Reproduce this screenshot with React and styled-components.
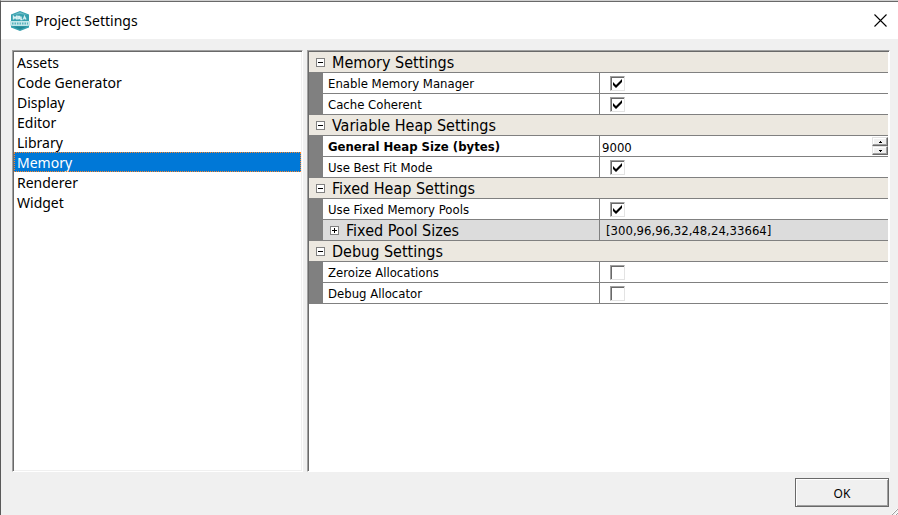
import React, { useState } from "react";
import styled, { createGlobalStyle, css } from "styled-components";

const ui = `"Noto Sans", "Open Sans", sans-serif`;
const grid = `"DejaVu Sans Condensed", "DejaVu Sans", sans-serif`;

const GlobalStyle = createGlobalStyle`
  *, *::before, *::after { box-sizing: border-box; }
  body { margin: 0; background: #f0f0f0; color: #000; }
  button, input { font: inherit; color: inherit; margin: 0; padding: 0; border: 0; background: none; }
`;

const sunken = css`
  background: #fff;
  border: 1px solid;
  border-color: #a0a0a0 #fff #fff #a0a0a0;
  box-shadow: inset 1px 1px #696969;
  padding: 1px;
`;

const Dialog = styled.div`
  position: relative;
  display: flex;
  flex-direction: column;
  height: 100vh;
  border-left: 1px solid #5a5a5a;
  border-top: 1px solid #d0d0d0;
  background: #f0f0f0;
  font: 14px/18px ${ui};
`;

const TitleBar = styled.header`
  display: flex;
  align-items: center;
  flex: none;
  height: 38px;
  padding: 0 11px 0 8px;
  gap: 4px;
  background: #fff;
  border-top: 1px solid #696969;
`;

const Title = styled.h1`
  flex: 1;
  margin: 0;
  font: inherit;
`;

const CloseButton = styled.button`
  display: grid;
  width: 13px;
  height: 13px;
`;

const Panels = styled.main`
  flex: 1;
  min-height: 0;
  display: grid;
  grid-template-columns: 291px 1fr;
  gap: 4px;
  padding: 11px 8px 0 11px;
`;

const CategoryList = styled.nav`
  ${sunken}
  display: flex;
  flex-direction: column;
  box-shadow: inset 1px 1px #696969, inset -1px -1px #f0f0f0;
`;

const Category = styled.button`
  height: 20px;
  padding: 2px 3px 0;
  text-align: left;
  background: ${(p) => (p.$selected ? "#0078d7" : "transparent")};
  color: ${(p) => (p.$selected ? "#fff" : "#000")};
  outline: ${(p) => (p.$selected ? "1px dotted #ff8728" : "none")};
  outline-offset: -1px;
`;

const PropertyPanel = styled.section`
  ${sunken}
`;

const PropertyTable = styled.table`
  width: 100%;
  table-layout: fixed;
  border-collapse: separate;
  border-spacing: 0;
  font: 13px/18px ${grid};
`;

const GutterCol = styled.col`
  width: 14px;
`;

const NameCol = styled.col`
  width: 277px;
`;

const Cell = styled.td`
  height: 21px;
  padding: 0;
  border-bottom: 1px solid #808080;
  background: ${(p) => (p.$group ? "#dcdcdc" : "#fff")};
`;

const Gutter = styled(Cell)`
  background: #808080;
`;

const NameCell = styled(Cell)`
  padding-left: 5px;
  border-right: 1px solid #808080;
  text-align: left;
  font-weight: ${(p) => (p.$modified ? "bold" : "normal")};
`;

const GroupCell = styled(NameCell)`
  padding-left: 7px;
`;

const SectionCell = styled.th`
  height: 21px;
  padding: 0 0 0 7px;
  text-align: left;
  font-weight: normal;
  background: #ece8e0;
  border-bottom: 1px solid #808080;
`;

const NameLabel = styled.label`
  display: block;
  padding-top: 2px;
`;

const Expander = styled.button`
  display: flex;
  align-items: center;
  gap: 7px;
  height: 20px;
  font-size: 16px;
`;

const ExpanderText = styled.span`
  padding-top: 2px;
`;

const CheckBox = styled.span`
  display: grid;
  grid-template: 15px / 15px;
  place-items: center;
  margin-left: 10px;
  & > * { grid-area: 1 / 1; }
`;

const CheckInput = styled.input`
  appearance: none;
  width: 15px;
  height: 15px;
  background: #fff;
  border: 1px solid;
  border-color: #a0a0a0 #e3e3e3 #e3e3e3 #a0a0a0;
  box-shadow: inset 1px 1px #696969;
`;

const Tick = styled.svg`
  pointer-events: none;
`;

const SpinBox = styled.div`
  display: flex;
  align-items: center;
  height: 20px;
`;

const NumberInput = styled.input`
  flex: 1;
  min-width: 0;
  height: 20px;
  padding: 2px 0 0 2px;
`;

const SpinButtons = styled.div`
  display: flex;
  flex-direction: column;
`;

const SpinButton = styled.button`
  display: grid;
  place-items: center;
  width: 16px;
  height: 9px;
  background: #f0f0f0;
  border: 1px solid;
  border-color: #e3e3e3 #696969 #696969 #e3e3e3;
  box-shadow: inset -1px -1px #a0a0a0, inset 1px 1px #fff;
`;

const GroupValue = styled.span`
  display: block;
  padding: 2px 0 0 6px;
`;

const Footer = styled.footer`
  display: flex;
  justify-content: flex-end;
  flex: none;
  padding: 6px 9px 8px;
`;

const OkButton = styled.button`
  width: 94px;
  height: 29px;
  padding-top: 2px;
  font-size: 12px;
  border: 1px solid #696969;
  box-shadow: inset 1px 1px #fff, inset -1px -1px #a0a0a0;
`;

const ResizeGrip = styled.svg`
  position: absolute;
  right: 0;
  bottom: 0;
`;

const AppIcon = () => (
  <svg width="22" height="22" viewBox="0 0 22 22" aria-hidden="true">
    <path d="M11 1 L20 4.500 V17.500 L11 21 L2 17.500 V4.500 Z" fill="#36a0ae" />
    <path d="M11 2 L18.500 5 L11 4 L3.500 5 Z" fill="#6cbcc6" />
    <path d="M4.500 9.500 V6.500 L6 8 L7.500 6.500 V9.500 M9 9.500 V6.500 H10.500 V8.500 H9 M12 6.500 V9.500 H13.500 M14.500 9.500 L15.500 6.500 L17 9.500" fill="none" stroke="#d8f1f3" strokeWidth="1.400" />
    <path d="M1 11 H21 V15.500 L18 16 H4 L1 15.500 Z" fill="#c3e6e9" />
    <path d="M3 13.500 H19" stroke="#58b3be" strokeWidth="2" strokeDasharray="1.500 1" />
    <path d="M4 16.500 H18 L11 19.500 Z" fill="#238795" />
  </svg>
);

const CloseIcon = () => (
  <svg width="13" height="13" viewBox="0 0 13 13" aria-hidden="true">
    <path d="M0.500 0.500 L12.500 12.500 M12.500 0.500 L0.500 12.500" stroke="#000" strokeWidth="1.100" />
  </svg>
);

const BoxIcon = ({ open }) => (
  <svg width="9" height="9" viewBox="0 0 9 9" shapeRendering="crispEdges" aria-hidden="true">
    <rect x="0.500" y="0.500" width="8" height="8" fill="#fff" stroke="#808080" />
    <path d={open ? "M2 4.500 H7" : "M2 4.500 H7 M4.500 2 V7"} stroke="#000" />
  </svg>
);

const ArrowIcon = ({ down }) => (
  <svg width="3" height="2" viewBox="0 0 3 2" shapeRendering="crispEdges" aria-hidden="true">
    <path d={down ? "M0 0 H3 V1 H2 V2 H1 V1 H0 Z" : "M1 0 H2 V1 H3 V2 H0 V1 H1 Z"} fill="#000" />
  </svg>
);

const CATEGORIES = ["Assets", "Code Generator", "Display", "Editor", "Library", "Memory", "Renderer", "Widget"];

const SECTIONS = [
  {
    title: "Memory Settings",
    rows: [
      { id: "manager", name: "Enable Memory Manager", kind: "check", on: true },
      { id: "coherent", name: "Cache Coherent", kind: "check", on: true },
    ],
  },
  {
    title: "Variable Heap Settings",
    rows: [
      { id: "heap", name: "General Heap Size (bytes)", kind: "number", value: 9000 },
      { id: "bestfit", name: "Use Best Fit Mode", kind: "check", on: true },
    ],
  },
  {
    title: "Fixed Heap Settings",
    rows: [
      { id: "pools", name: "Use Fixed Memory Pools", kind: "check", on: true },
      { id: "sizes", name: "Fixed Pool Sizes", kind: "group", value: "[300,96,96,32,48,24,33664]" },
    ],
  },
  {
    title: "Debug Settings",
    rows: [
      { id: "zeroize", name: "Zeroize Allocations", kind: "check", on: false },
      { id: "debug", name: "Debug Allocator", kind: "check", on: false },
    ],
  },
];

function CheckValue({ id, initial }) {
  const [on, setOn] = useState(initial);
  return (
    <CheckBox>
      <CheckInput type="checkbox" id={id} checked={on} onChange={() => setOn(!on)} />
      {on && (
        <Tick width="9" height="9" viewBox="0 0 9 9" aria-hidden="true">
          <path d="M0 3 L3 6 L9 0 V3 L3 9 L0 6 Z" fill="#000" />
        </Tick>
      )}
    </CheckBox>
  );
}

function NumberValue({ id, initial }) {
  const [value, setValue] = useState(initial);
  return (
    <SpinBox>
      <NumberInput
        id={id}
        inputMode="numeric"
        value={value}
        onChange={(e) => setValue(Number(e.target.value) || 0)}
      />
      <SpinButtons>
        <SpinButton type="button" aria-label="Increase" onClick={() => setValue(value + 1)}>
          <ArrowIcon />
        </SpinButton>
        <SpinButton type="button" aria-label="Decrease" onClick={() => setValue(value - 1)}>
          <ArrowIcon down />
        </SpinButton>
      </SpinButtons>
    </SpinBox>
  );
}

function PropertyRow({ row }) {
  if (row.kind === "group") {
    return (
      <tr>
        <Gutter />
        <GroupCell $group>
          <Expander type="button" aria-expanded="false">
            <BoxIcon />
            <ExpanderText>{row.name}</ExpanderText>
          </Expander>
        </GroupCell>
        <Cell $group>
          <GroupValue>{row.value}</GroupValue>
        </Cell>
      </tr>
    );
  }
  return (
    <tr>
      <Gutter />
      <NameCell $modified={row.kind === "number"}>
        <NameLabel htmlFor={row.id}>{row.name}</NameLabel>
      </NameCell>
      <Cell>
        {row.kind === "check" ? (
          <CheckValue id={row.id} initial={row.on} />
        ) : (
          <NumberValue id={row.id} initial={row.value} />
        )}
      </Cell>
    </tr>
  );
}

function Section({ section }) {
  const [open, setOpen] = useState(true);
  return (
    <tbody>
      <tr>
        <SectionCell colSpan={3}>
          <Expander type="button" aria-expanded={open} onClick={() => setOpen(!open)}>
            <BoxIcon open={open} />
            <ExpanderText>{section.title}</ExpanderText>
          </Expander>
        </SectionCell>
      </tr>
      {open && section.rows.map((row) => <PropertyRow key={row.id} row={row} />)}
    </tbody>
  );
}

export default function App() {
  const [selected, setSelected] = useState("Memory");
  return (
    <>
      <GlobalStyle />
      <Dialog role="dialog" aria-label="Project Settings">
        <TitleBar>
          <AppIcon />
          <Title>Project Settings</Title>
          <CloseButton type="button" aria-label="Close">
            <CloseIcon />
          </CloseButton>
        </TitleBar>
        <Panels>
          <CategoryList>
            {CATEGORIES.map((name) => (
              <Category key={name} type="button" $selected={name === selected} onClick={() => setSelected(name)}>
                {name}
              </Category>
            ))}
          </CategoryList>
          <PropertyPanel>
            <PropertyTable>
              <colgroup>
                <GutterCol />
                <NameCol />
                <col />
              </colgroup>
              {SECTIONS.map((section) => (
                <Section key={section.title} section={section} />
              ))}
            </PropertyTable>
          </PropertyPanel>
        </Panels>
        <Footer>
          <OkButton type="button">OK</OkButton>
        </Footer>
        <ResizeGrip width="6" height="6" viewBox="0 0 6 6" aria-hidden="true">
          <path d="M0 5 L5 0 M3 6 L6 3" stroke="#fff" />
          <path d="M0 6 L6 0 M4 6 L6 4" stroke="#a0a0a0" />
        </ResizeGrip>
      </Dialog>
    </>
  );
}
